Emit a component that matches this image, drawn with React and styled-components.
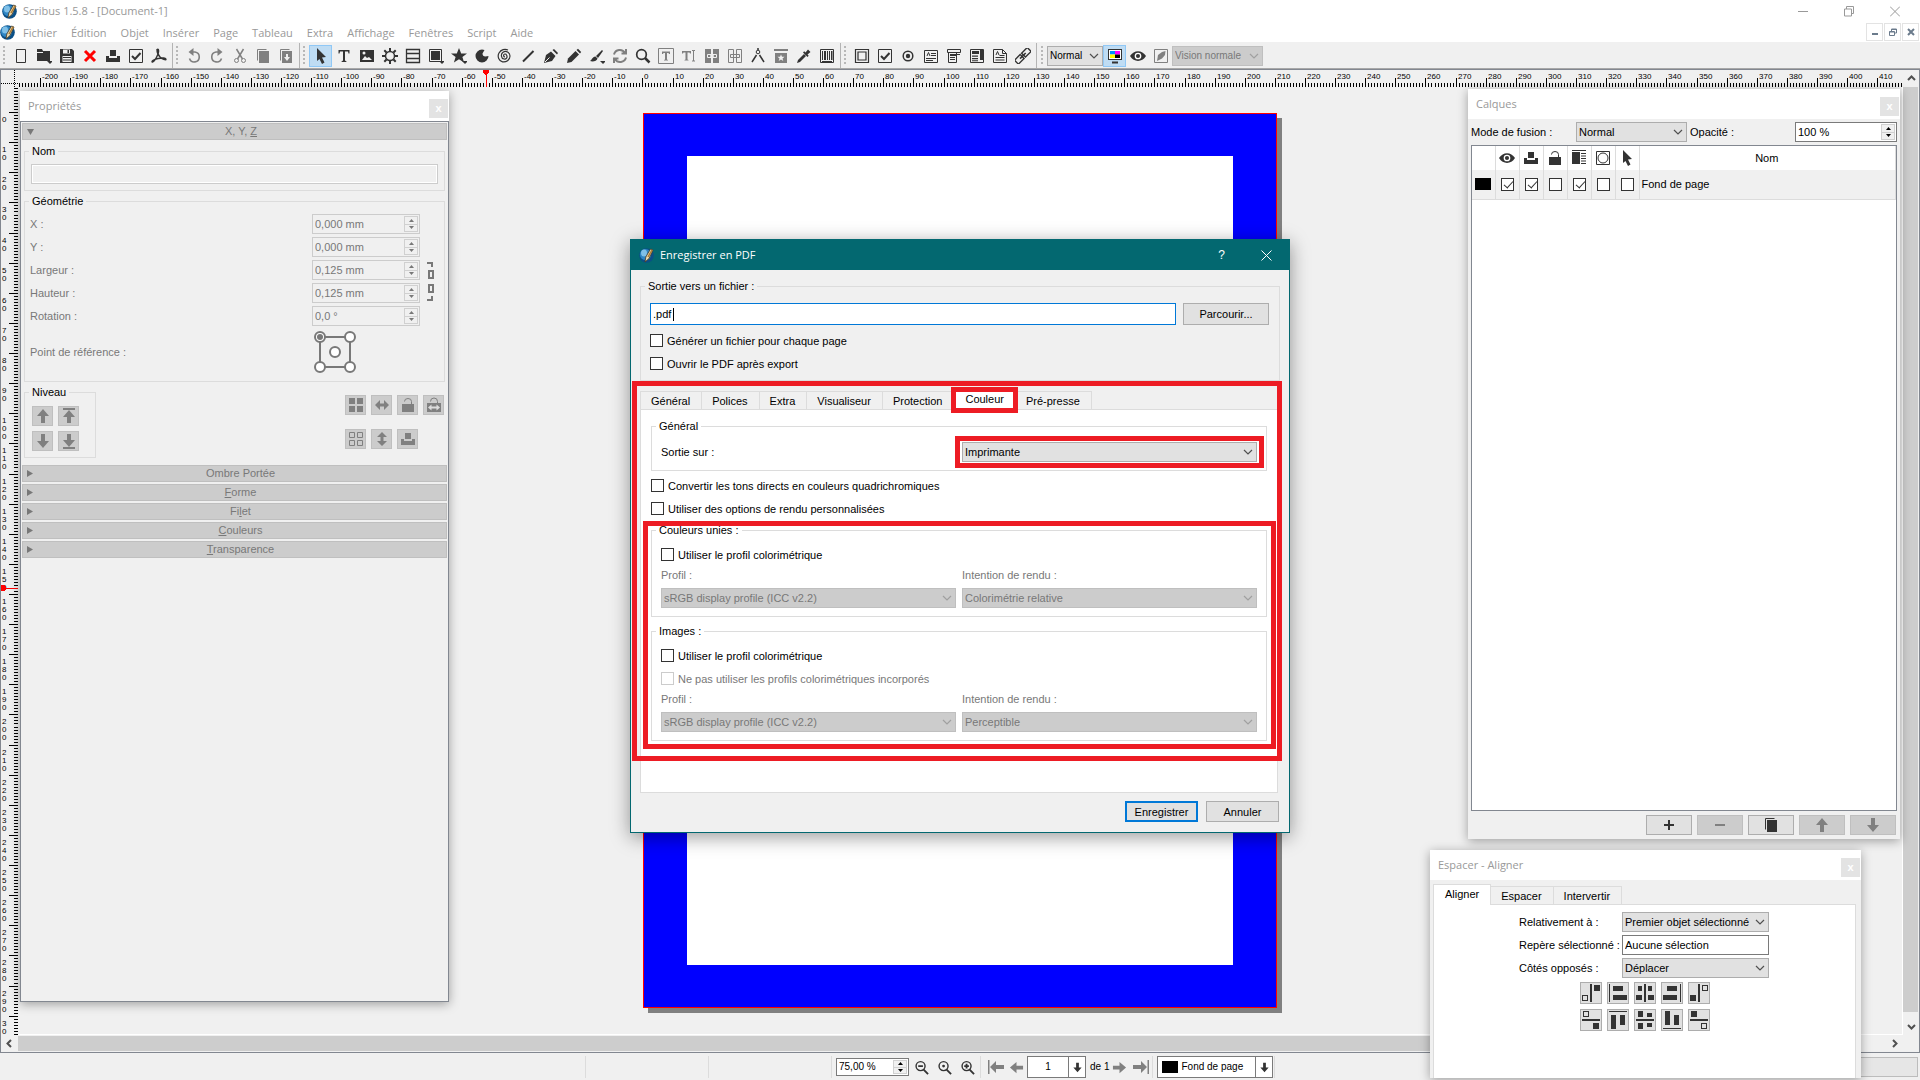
import React from "react";
import styled, { createGlobalStyle } from "styled-components";

const INK = "#333333";
const LINE = "#dcdcdc";
const FRAME = "#828790";
const RED = "#ed1c24";

/* ---------- rulers ---------- */

const MM = 3.0118;
const RULER_END = 948;
const ticks = (from, to) =>
	Array.from({ length: to - from + 1 }, (_, i) => from + i);

const HRuler = () => (
	<RulerSvg>
		{ticks(-208, 418).map((n) => {
			const x = Math.floor(642.9 + n * MM) - 18;
			const major = n % 10 === 0;
			return (
				<g key={n}>
					<rect x={x} y={major ? 8 : 13} width="1" height={major ? 9 : 4} />
					{major && (
						<text x={x + 2} y="9">
							{n}
						</text>
					)}
				</g>
			);
		})}
		<g fill="#ff0000">
			<path d="M465 0h6v2l-2 3h-2l-2-3z" />
			<rect x="468" y="2" width="1" height="15" />
		</g>
	</RulerSvg>
);

const VRuler = () => (
	<RulerSvg>
		{ticks(-8, 307).map((n) => {
			const y = Math.floor(112.6 + n * MM) - 87;
			const major = n % 10 === 0;
			return (
				<g key={n}>
					<rect x={major ? 8 : 13} y={y} width={major ? 9 : 4} height="1" />
					{major &&
						String(n)
							.split("")
							.filter((_, i) => y + 10 + i * 8 < RULER_END)
							.map((d, i) => (
								<text key={i} x="1" y={y + 10 + i * 8}>
									{d}
								</text>
							))}
				</g>
			);
		})}
		<g fill="#ff0000">
			<path d="M0 498h3l2 2v2l-2 2h-3z" />
			<rect x="2" y="501" width="15" height="1" />
		</g>
	</RulerSvg>
);

/* ---------- icons ---------- */

const caret = <path d="M11 13h6l-3 3z" />;
const ICONS = {
	blank: <path d="M3.5 1.5h9v13h-9z" fill="none" stroke="currentColor" />,
	open: (
		<>
			<path d="M1 1h5l1 2h7v10H1z" />
			<path d="M1 4.5h6" stroke="#f0f0f0" />
			{caret}
		</>
	),
	save: (
		<>
			<path d="M1 1h12l2 2v12H1z" />
			<path d="M4 1.5h7v4H4z" fill="#f0f0f0" />
			<path d="M8.5 2h1.500v3H8.500z" />
			<path d="M3.5 8h9v6h-9z" fill="#f0f0f0" />
			<path d="M4 9.5h8M4 12h8" stroke="currentColor" />
		</>
	),
	close: <path d="M3 3l10 10M13 3L3 13" stroke="#ff0000" strokeWidth="3" />,
	print: <path d="M5 2h6v6H5zM1 8h3v2h8V8h3v6H1z" />,
	preflight: (
		<>
			<path d="M1.5 1.5h13v13h-13z" fill="none" stroke="currentColor" />
			<path d="M4 8l3 3 5.500-6" fill="none" stroke="currentColor" strokeWidth="2" />
		</>
	),
	pdf: (
		<>
			<path d="M6 1.500c1.800-1 2 2 1 4.500S4 13 1.500 14c-1.500 0 .500-2.500 5.500-3.500s8-.500 8 .800-4-.300-6-2.300S6 4 6 1.500z" fill="none" stroke="currentColor" strokeWidth="1.400" />
			<path d="M6 1h1.500v5L6 4z" />
		</>
	),
	undo: (
		<>
			<path d="M6 4h3a5 5 0 1 1-5.500 6.500" fill="none" stroke="currentColor" strokeWidth="1.600" />
			<path d="M7.500 0v8L2.500 4z" />
		</>
	),
	redo: (
		<>
			<path d="M10 4H7a5 5 0 1 0 5.500 6.500" fill="none" stroke="currentColor" strokeWidth="1.600" />
			<path d="M8.500 0v8l5-4z" />
		</>
	),
	cut: (
		<>
			<path d="M4.500 1l6 10M11.500 1l-6 10" stroke="currentColor" strokeWidth="1.500" />
			<circle cx="4.500" cy="12.500" r="2" fill="none" stroke="currentColor" />
			<circle cx="11.500" cy="12.500" r="2" fill="none" stroke="currentColor" />
		</>
	),
	copy: (
		<>
			<path d="M2.500 12.500v-11h9" fill="none" stroke="currentColor" />
			<path d="M4 3h10v12H4z" />
		</>
	),
	paste: (
		<>
			<path d="M2.500 12.500v-11h9" fill="none" stroke="currentColor" />
			<path d="M4 3h10v12H4z" />
			<path d="M8 6h2v3h2l-3 4-3-4h2z" fill="#f0f0f0" />
		</>
	),
	cursor: <path d="M4 0l9 9-4 .500 2.500 5L9 16l-2.500-5L4 13z" />,
	text: <path d="M2.500 2h11v3.500h-1L12 3.500H9v9l1.500 1v.500h-5v-.500l1.500-1v-9H4l-.500 2h-1z" />,
	image: (
		<>
			<path d="M1 2h14v12H1z" />
			<path d="M3 12l3-4 2 2 2-1 3 3z" fill="#f0f0f0" />
			<circle cx="5" cy="5" r="1.500" fill="#f0f0f0" />
		</>
	),
	gear: (
		<>
			<circle cx="8" cy="8" r="4.500" fill="none" stroke="currentColor" strokeWidth="1.500" />
			<path
				d="M8 0v3M8 13v3M0 8h3M13 8h3M2.300 2.300l2.200 2.200M11.500 11.500l2.200 2.200M13.700 2.300l-2.200 2.200M4.500 11.500l-2.200 2.200"
				stroke="currentColor"
				strokeWidth="2"
			/>
		</>
	),
	table: (
		<path d="M1.500 1.500h13v13h-13zM1.500 5.500h13M1.500 10.500h13" fill="none" stroke="currentColor" strokeWidth="1.300" />
	),
	shape: (
		<>
			<path d="M1.500 1.500h12v12h-12z" fill="none" stroke="currentColor" />
			<path d="M3 3h9v9H3z" />
			{caret}
		</>
	),
	star: (
		<>
			<path d="M8 0l2.200 5.500H16l-4.600 3.500 1.700 5.500L8 11.300 2.900 14.500 4.600 9 0 5.500h5.800z" />
			{caret}
		</>
	),
	arc: <path d="M8 1.500a6.500 6.500 0 1 0 6.500 6.500l-3 .500a3 3 0 0 1-3-3l2-3.500z" />,
	spiral: (
		<path
			d="M8 9a1.500 1.500 0 1 1 1.500-2C11 9.500 9 11.500 7 11 4 10.500 3.500 6 6 4.200 9 2 13 4.500 13 8c0 4-4 6.500-7.500 5.800C2 13 0 8.500 2 5 4 1.500 8 .500 11 2"
			fill="none"
			stroke="currentColor"
			strokeWidth="1.200"
		/>
	),
	line: <path d="M3 13.500L13.500 3" stroke="currentColor" strokeWidth="2" />,
	pen: (
		<>
			<path d="M1 15l2-8 5-3.500L12.500 8 9 13z" />
			<path d="M9.500 2l1.500-1 4 4-1 1.500z" />
			<path d="M2 14l4.500-4.500" stroke="#f0f0f0" />
		</>
	),
	pencil: (
		<>
			<path d="M1 15l1-4.500L9.500 3 13 6.500 5.500 14z" />
			<path d="M10.500 2L12 .800 15.200 4 14 5.500z" />
		</>
	),
	brush: (
		<>
			<path d="M13 2l1 1-5 7-2-2zM6.500 8.500l2 2C8 13 4 14 1 13c2-1 2-4 5.500-4.500z" />
			{caret}
		</>
	),
	rotate: (
		<path
			d="M2 6.500A6 6 0 0 1 13 5M14 1v4.500H9.500M14 9.500A6 6 0 0 1 3 11M2 15v-4.500h4.500"
			fill="none"
			stroke="currentColor"
			strokeWidth="2"
		/>
	),
	zoom: (
		<>
			<circle cx="6.500" cy="6.500" r="4.800" fill="none" stroke="currentColor" strokeWidth="1.700" />
			<path d="M10 10l4.500 4.500" stroke="currentColor" strokeWidth="2.500" />
		</>
	),
	textFrame: (
		<>
			<path d="M.500.500h15v15H.500z" fill="none" stroke="currentColor" />
			<path d="M4 3.500h8V6h-1l-.500-1H9v6.500l1 .500v.500H6V12l1-.500V5H5.500L5 6H4z" />
		</>
	),
	textEdit: (
		<>
			<path d="M1 3h9v2.500H9L8.500 4.500h-2v7l1 .500v.500h-4V12l1-.500v-7h-2L2 5.500H1z" />
			<path d="M11 2.500h1.500V13H11M14 2.500h-1.500V13H14" fill="none" stroke="currentColor" />
		</>
	),
	link: (
		<>
			<path d="M1 1h6v14H1zM9 1h6v14H9z" />
			<path d="M3.500 6.500H7v3H3.500zM9 6.500h3.500v3H9zM6 8h4" fill="none" stroke="#f0f0f0" />
		</>
	),
	unlink: (
		<path
			d="M1.500 1.500h5v13h-5zM9.500 1.500h5v13h-5zM3.500 6.500h9v3h-9z"
			fill="none"
			stroke="currentColor"
		/>
	),
	compass: (
		<>
			<circle cx="8" cy="4" r="1.800" fill="none" stroke="currentColor" />
			<path d="M8 0v2M6.500 7l-4.500 7M9.500 7l4.500 7" fill="none" stroke="currentColor" strokeWidth="1.500" />
		</>
	),
	pageStar: (
		<>
			<path d="M1 1h14v2H1zM2 5h12v10H2z" />
			<path d="M8 6.500l1 2.300h2.500l-2 1.600.800 2.600L8 11.500 5.700 13l.800-2.600-2-1.600H7z" fill="#f0f0f0" />
		</>
	),
	dropper: (
		<>
			<path d="M1 15l1-3 6-6 2 2-6 6z" />
			<path d="M7 4.500l1.200-1.200L9.500 4.500 12 1.500l2.500 2.500-3 2.500 1.200 1.300L11.500 9z" />
		</>
	),
	barcode: (
		<>
			<path d="M1.500 1.500h13v13h-13z" fill="none" stroke="currentColor" />
			<path d="M3 3h1v9H3zM5 3h2v9H5zM8 3h1v9H8zM10 3h1v9h-1zM12 3h1.500v9H12zM3 13h10v1H3z" />
		</>
	),
	frame: (
		<path d="M1.500 1.500h13v13h-13zM4 4h8v8H4z" fill="none" stroke="currentColor" strokeWidth="1.200" />
	),
	radio: (
		<>
			<circle cx="8" cy="8" r="4.800" fill="none" stroke="currentColor" strokeWidth="1.500" />
			<circle cx="8" cy="8" r="2.200" />
		</>
	),
	textField: (
		<>
			<path d="M1.500 2.500h13v12h-13zM8 5.500h5M8 7.500h5M3 10.500h10M3 12.500h7" fill="none" stroke="currentColor" />
			<path d="M4 8l1.500-3.500L7 8" fill="none" stroke="currentColor" />
		</>
	),
	comboField: (
		<>
			<path d="M1.500 1.500h13v3h-13zM2.500 4.500v10h8v-10M11 6.500h3" fill="none" stroke="currentColor" />
			<path d="M4 6h6v2H4zM4 9h5v1H4zM4 11h5v1H4z" />
		</>
	),
	listField: (
		<>
			<path d="M1.500 1.500h13v13h-13z" fill="none" stroke="currentColor" />
			<path d="M3 3h7v3H3zM3 7.500h6v1.200H3zM3 10h6v1.200H3zM3 12.300h6v1H3zM11 2h3v10h-3z" />
		</>
	),
	note: (
		<>
			<path d="M1.500 1.500h9l4 4v9h-13zM10.500 1.500v4h4M7.500 7.500h5M3.500 9.500h9M3.500 12h9" fill="none" stroke="currentColor" />
			<path d="M4 7l1.500-3.500L7 7" fill="none" stroke="currentColor" />
		</>
	),
	chain: (
		<g transform="rotate(-45 8 8)" fill="none" stroke="currentColor" strokeWidth="1.400">
			<rect x="-1" y="5" width="8" height="5.500" />
			<rect x="9" y="5" width="8" height="5.500" />
			<path d="M4 7.800h8" strokeWidth="1.600" />
		</g>
	),
	cmyk: (
		<>
			<path d="M1 1h14v11H1z" />
			<path d="M2 2h12v9H2z" fill="#fff" />
			<path d="M3 3h5v3.500H3z" fill="#0090ff" />
			<path d="M8 3h5v3.500H8z" fill="#ff00ff" />
			<path d="M3 6.500h5V10H3z" fill="#ffff00" />
			<path d="M8 6.500h5V10H8z" fill="#000" />
			<path d="M5 13.500h6v2H5z" />
		</>
	),
	eye: (
		<>
			<path d="M0 8c4-6.500 12-6.500 16 0-4 6.500-12 6.500-16 0z" />
			<circle cx="8" cy="8" r="2.700" fill="none" stroke="#fff" strokeWidth="1.300" />
		</>
	),
	penFrame: (
		<>
			<path d="M1.500 1.500h13v13h-13z" fill="none" stroke="currentColor" />
			<path d="M4 13l1-6 4-3 3.500-1-.500 4-3 3.500z" />
		</>
	),
	lock: (
		<>
			<path d="M2 7h12v8H2z" />
			<path d="M4.500 4.500a3.500 3 0 0 1 7 0V7" fill="none" stroke="currentColor" />
		</>
	),
	lockSize: (
		<>
			<path d="M1 6h14v9H1z" />
			<path d="M4.500 4.500a3.500 3.500 0 0 1 7 0V6" fill="none" stroke="currentColor" />
			<path d="M2 10.500L5.500 7.500v2h5v-2l3.500 3-3.500 3v-2h-5v2z" fill="#ddd" />
		</>
	),
	flow: (
		<>
			<path d="M1 2h8v12H1z" />
			<path d="M1 .500h14M10 3.500h5M10 6h5M10 8.500h5M10 11h5M10 13.500h5" stroke="currentColor" />
		</>
	),
	outline: (
		<>
			<path d="M1.500 1.500h13v13h-13z" fill="none" stroke="currentColor" />
			<circle cx="8" cy="8" r="5" fill="none" stroke="currentColor" />
		</>
	),
	up: <path d="M8 1l6 7h-4v7H6V8H2z" />,
	down: <path d="M8 15l6-7h-4V1H6v7H2z" />,
	top: <path d="M2 0h12v2H2zM8 2l6 7h-4v6H6V9H2z" />,
	bottom: <path d="M2 14h12v2H2zM8 14l6-7h-4V1H6v6H2z" />,
	left: <path d="M1 8l7-6v4h7v4H8v4z" />,
	right: <path d="M15 8L8 2v4H1v4h7v4z" />,
	first: <path d="M0 1h1.500v14H0zM2 8l6-6v4h8v4H8v4z" />,
	last: <path d="M14.500 1H16v14h-1.500zM14 8L8 2v4H0v4h8v4z" />,
	grid: <path d="M1 1h6v6H1zM9 1h6v6H9zM1 9h6v6H1zM9 9h6v6H9z" />,
	gridHollow: (
		<path
			d="M1.500 1.500h5v5h-5zM9.500 1.500h5v5h-5zM1.500 9.500h5v5h-5zM9.500 9.500h5v5h-5z"
			fill="none"
			stroke="currentColor"
		/>
	),
	flipH: <path d="M1 8l5-5v3.500h4V3l5 5-5 5V9.500H6V13z" />,
	flipV: <path d="M8 1l5 5H9.500v4H13l-5 5-5-5h3.500V6H3z" />,
	plus: <path d="M7 3h2v4h4v2H9v4H7V9H3V7h4z" />,
	minus: <path d="M3 7h10v2H3z" />,
	zoomOut: (
		<>
			<circle cx="7" cy="6.500" r="4.800" fill="none" stroke="currentColor" strokeWidth="1.500" />
			<path d="M4.500 6.500h5M10 10l5 5" stroke="currentColor" strokeWidth="2" />
		</>
	),
	zoomFit: (
		<>
			<circle cx="7" cy="6.500" r="4.800" fill="none" stroke="currentColor" strokeWidth="1.500" />
			<circle cx="7" cy="6.500" r="1.500" />
			<path d="M10 10l5 5" stroke="currentColor" strokeWidth="2" />
		</>
	),
	zoomIn: (
		<>
			<circle cx="7" cy="6.500" r="4.800" fill="none" stroke="currentColor" strokeWidth="1.500" />
			<path d="M4.500 6.500h5M7 4v5M10 10l5 5" stroke="currentColor" strokeWidth="2" />
		</>
	),
};

const Icon = ({ name, size = 16 }) => (
	<svg width={size} height={size} viewBox="0 0 16 16" fill="currentColor" aria-hidden="true">
		{ICONS[name]}
	</svg>
);

const Logo = () => (
	<svg width="15" height="15" viewBox="0 0 15 15" aria-hidden="true">
		<circle cx="7.500" cy="7.500" r="7.300" fill="#0b4f86" />
		<circle cx="6.500" cy="6.500" r="5.600" fill="#2f86c4" />
		<ellipse cx="5" cy="5" rx="3" ry="3.500" fill="#7fc0e8" />
		<path d="M6 14l.800-5L11.500 1l2.500 1-4 8.500z" fill="#e9d9b0" stroke="#4a3a22" strokeWidth=".800" />
		<path d="M9 9l4-7" stroke="#b07c30" strokeWidth="1.500" />
	</svg>
);

const Chevron = () => (
	<svg width="10" height="6" viewBox="0 0 10 6" aria-hidden="true">
		<path d="M1 1l4 4 4-4" fill="none" stroke="currentColor" strokeWidth="1.200" />
	</svg>
);

const ScrollArrow = ({ d }) => (
	<svg width="9" height="9" viewBox="0 0 9 9" aria-hidden="true">
		<path d={d} fill="none" stroke="#505050" strokeWidth="2" />
	</svg>
);

const ReferencePoint = () => (
	<svg width="46" height="46" viewBox="0 0 46 46" aria-hidden="true">
		<g fill="none" stroke="#787878" strokeWidth="2">
			<path d="M8 8h30v30H8z" />
			{[[8, 8], [38, 8], [23, 23], [8, 38], [38, 38]].map(([x, y]) => (
				<circle key={`${x}-${y}`} cx={x} cy={y} r="5" fill="#fff" />
			))}
			<circle cx="8" cy="8" r="3" fill="#787878" stroke="none" />
		</g>
	</svg>
);

const LinkIcon = () => (
	<svg width="8" height="40" viewBox="0 0 8 40" fill="none" stroke="#787878" strokeWidth="2" aria-hidden="true">
		<path d="M0 1h5v4M2 9h4v7H2zM2 23h4v7H2zM0 38h5v-4" />
	</svg>
);

// "s" is a solid block, "h" a hollow one, "l" the guide line: [kind, x, y, w, h]
const ALIGN_ICONS = [
	[["h", 2, 13, 6, 6], ["l", 10, 2, 2, 18], ["s", 14, 3, 6, 6]],
	[["l", 2, 2, 1, 18], ["s", 6, 4, 10, 5], ["s", 6, 13, 14, 5]],
	[["l", 10, 2, 2, 18], ["s", 4, 4, 4, 5], ["s", 14, 4, 4, 5], ["s", 2, 13, 6, 5], ["s", 14, 13, 6, 5]],
	[["l", 19, 2, 1, 18], ["s", 6, 4, 10, 5], ["s", 2, 13, 14, 5]],
	[["s", 2, 13, 6, 6], ["l", 10, 2, 2, 18], ["h", 14, 3, 6, 6]],
	[["h", 3, 2, 6, 6], ["l", 2, 10, 18, 2], ["s", 13, 14, 6, 6]],
	[["l", 2, 2, 18, 1], ["s", 4, 6, 5, 14], ["s", 13, 6, 5, 10]],
	[["s", 4, 2, 5, 6], ["s", 13, 4, 5, 4], ["l", 2, 10, 18, 2], ["s", 4, 14, 5, 6], ["s", 13, 14, 5, 4]],
	[["l", 2, 19, 18, 1], ["s", 4, 2, 5, 14], ["s", 13, 6, 5, 10]],
	[["s", 3, 2, 6, 6], ["l", 2, 10, 18, 2], ["h", 13, 14, 6, 6]],
];

const AlignIcon = ({ parts }) => (
	<svg width="20" height="20" viewBox="1 1 20 20" aria-hidden="true">
		{parts.map(([kind, x, y, w, h], i) =>
			kind === "h" ? (
				<rect key={i} x={x + 0.5} y={y + 0.5} width={w - 1} height={h - 1} fill="none" stroke={INK} />
			) : (
				<rect key={i} x={x} y={y} width={w} height={h} fill={INK} />
			)
		)}
	</svg>
);

/* ---------- shared controls ---------- */

const Select = ({ id, value, disabled, small, label }) => (
	<SelectBox $disabled={disabled}>
		<SelectInput id={id} disabled={disabled} aria-label={label} $small={small} defaultValue={value}>
			<option>{value}</option>
		</SelectInput>
		<Chevron />
	</SelectBox>
);

const Spin = ({ id, value, disabled, label, small }) => (
	<SpinBox $disabled={disabled} $small={small}>
		<input id={id} defaultValue={value} disabled={disabled} aria-label={label} />
		<SpinArrows>
			<button type="button" disabled={disabled} aria-label="Augmenter">
				<svg width="5" height="3" viewBox="0 0 5 3"><path d="M0 3L2.500 0 5 3z" fill="currentColor" /></svg>
			</button>
			<button type="button" disabled={disabled} aria-label="Diminuer">
				<svg width="5" height="3" viewBox="0 0 5 3"><path d="M0 0l2.500 3L5 0z" fill="currentColor" /></svg>
			</button>
		</SpinArrows>
	</SpinBox>
);

const Check = ({ children, disabled }) => (
	<CheckLabel $disabled={disabled}>
		<Checkbox type="checkbox" disabled={disabled} />
		{children}
	</CheckLabel>
);

const PanelTitle = ({ children }) => (
	<PanelBar>
		<h2>{children}</h2>
		<PanelClose type="button" aria-label="Fermer">x</PanelClose>
	</PanelBar>
);

/* ---------- toolbar ---------- */

const MENUS = ["Fichier", "Édition", "Objet", "Insérer", "Page", "Tableau", "Extra", "Affichage", "Fenêtres", "Script", "Aide"];

// a leading "-" greys the tool out, a leading "*" marks it as active
const TOOLS = [
	["blank", "open", "save", "close", "print", "preflight", "pdf"],
	["-undo", "-redo", "-cut", "-copy", "-paste"],
	["*cursor", "text", "image", "gear", "table", "shape", "star", "arc", "spiral", "line", "pen", "pencil", "brush", "-rotate", "zoom", "-textFrame", "-textEdit", "-link", "-unlink", "compass", "-pageStar", "dropper", "barcode"],
	["frame", "preflight", "radio", "textField", "comboField", "listField", "note", "chain"],
];

const Tool = ({ spec }) => {
	const name = spec.replace(/^[-*]/, "");
	return (
		<ToolButton type="button" aria-label={name} $active={spec[0] === "*"} $dim={spec[0] === "-"}>
			<Icon name={name} />
		</ToolButton>
	);
};

const Toolbar = () => (
	<ToolRow>
		{TOOLS.map((group, i) => (
			<ToolGroup key={i}>
				<Grip />
				{group.map((t) => (
					<Tool key={t} spec={t} />
				))}
			</ToolGroup>
		))}
		<ToolGroup $last>
			<Grip />
			<PreviewQuality>
				<Select value="Normal" small label="Qualité" />
			</PreviewQuality>
			<Tool spec="*cmyk" />
			<Tool spec="eye" />
			<Tool spec="-penFrame" />
			<VisionMode>
				<Select value="Vision normale" small disabled label="Vision" />
			</VisionMode>
		</ToolGroup>
	</ToolRow>
);

/* ---------- panels ---------- */

const GEOMETRY = [
	["X :", "0,000 mm"],
	["Y :", "0,000 mm"],
	["Largeur :", "0,125 mm"],
	["Hauteur :", "0,125 mm"],
	["Rotation :", "0,0 °"],
];

const SECTIONS = [
	["", "", "Ombre Portée"],
	["", "F", "orme"],
	["Fi", "l", "et"],
	["", "C", "ouleurs"],
	["", "T", "ransparence"],
];

const Properties = () => (
	<PropertiesPanel>
		<PanelTitle>Propriétés</PanelTitle>
		<PropertiesBody>
			<SectionBar type="button">
				<svg width="7" height="6" viewBox="0 0 7 6"><path d="M0 0h7L3.500 6z" fill="currentColor" /></svg>
				<span>X, Y, <u>Z</u></span>
			</SectionBar>
			<PropertiesForm>
				<Group>
					<legend>Nom</legend>
					<NameBody>
						<NameInput disabled aria-label="Nom" />
					</NameBody>
				</Group>
				<Group>
					<legend>Géométrie</legend>
					<GeometryGrid>
						{GEOMETRY.map(([label, value], i) => (
							<React.Fragment key={label}>
								<DimLabel htmlFor={`geo${i}`}>{label}</DimLabel>
								<Spin id={`geo${i}`} value={value} disabled />
							</React.Fragment>
						))}
						<DimLabel as="span">Point de référence :</DimLabel>
						<ReferencePoint />
						<LinkCell>
							<LinkIcon />
						</LinkCell>
					</GeometryGrid>
				</Group>
				<LevelRow>
					<Group>
						<legend>Niveau</legend>
						<LevelGrid>
							{["up", "top", "down", "bottom"].map((n) => (
								<SmallButton key={n} type="button" disabled aria-label={n}><Icon name={n} /></SmallButton>
							))}
						</LevelGrid>
					</Group>
					<ObjectGrid>
						{["grid", "flipH", "lock", "lockSize", "gridHollow", "flipV", "print"].map((n) => (
							<SmallButton key={n} type="button" disabled aria-label={n}><Icon name={n} /></SmallButton>
						))}
					</ObjectGrid>
				</LevelRow>
			</PropertiesForm>
			<SectionList>
				{SECTIONS.map(([a, key, b]) => (
					<SectionBar key={b} type="button">
						<svg width="6" height="7" viewBox="0 0 6 7"><path d="M0 0v7l6-3.500z" fill="currentColor" /></svg>
						<span>{a}{key && <u>{key}</u>}{b}</span>
					</SectionBar>
				))}
			</SectionList>
		</PropertiesBody>
	</PropertiesPanel>
);

const Layers = () => (
	<LayersPanel>
		<PanelTitle>Calques</PanelTitle>
		<LayersBody>
			<BlendRow>
				<label htmlFor="blend">Mode de fusion :</label>
				<Select id="blend" value="Normal" />
				<label htmlFor="opacity">Opacité :</label>
				<Spin id="opacity" value="100 %" />
			</BlendRow>
			<LayerList>
				<LayerTable>
					<thead>
						<tr>
							<th aria-label="Couleur" />
							{["eye", "print", "lock", "flow", "outline", "cursor"].map((n) => (
								<th key={n} aria-label={n}><Icon name={n} /></th>
							))}
							<th>Nom</th>
						</tr>
					</thead>
					<tbody>
						<tr>
							<td><Swatch /></td>
							{[true, true, false, true, false, false].map((on, i) => (
								<td key={i}>
									<Checkbox type="checkbox" defaultChecked={on} aria-label={`Option ${i + 1}`} />
								</td>
							))}
							<td>Fond de page</td>
						</tr>
					</tbody>
				</LayerTable>
			</LayerList>
			<LayerButtons>
				{["plus", "-minus", "copy", "-up", "-down"].map((s) => (
					<WideButton key={s} type="button" disabled={s[0] === "-"} aria-label={s.replace("-", "")}>
						<Icon name={s.replace("-", "")} />
					</WideButton>
				))}
			</LayerButtons>
		</LayersBody>
	</LayersPanel>
);

const Align = () => (
	<AlignPanel>
		<PanelTitle>Espacer - Aligner</PanelTitle>
		<AlignBody>
			<TabList role="tablist">
				<Tab type="button" role="tab" aria-selected="true" $on>Aligner</Tab>
				<Tab type="button" role="tab">Espacer</Tab>
				<Tab type="button" role="tab">Intervertir</Tab>
			</TabList>
			<AlignPane>
				<AlignForm>
					<label htmlFor="relative">Relativement à :</label>
					<Select id="relative" value="Premier objet sélectionné" />
					<label htmlFor="guide">Repère sélectionné :</label>
					<GuideInput id="guide" defaultValue="Aucune sélection" />
					<label htmlFor="sides">Côtés opposés :</label>
					<Select id="sides" value="Déplacer" />
				</AlignForm>
				<AlignGrid>
					{ALIGN_ICONS.map((parts, i) => (
						<AlignButton key={i} type="button" aria-label={`Alignement ${i + 1}`}>
							<AlignIcon parts={parts} />
						</AlignButton>
					))}
				</AlignGrid>
			</AlignPane>
		</AlignBody>
	</AlignPanel>
);

const ProfileFields = ({ id, intent }) => (
	<TwoColumns>
		<DimLabel htmlFor={`${id}-profile`}>Profil :</DimLabel>
		<DimLabel htmlFor={`${id}-intent`}>Intention de rendu :</DimLabel>
		<Select id={`${id}-profile`} value="sRGB display profile (ICC v2.2)" disabled />
		<Select id={`${id}-intent`} value={intent} disabled />
	</TwoColumns>
);

const ExportDialog = () => (
	<Dialog role="dialog" aria-label="Enregistrer en PDF">
		<DialogBar>
			<Logo />
			<h2>Enregistrer en PDF</h2>
			<DialogBarButton type="button">?</DialogBarButton>
			<DialogBarButton type="button" aria-label="Fermer">
				<svg width="11" height="11" viewBox="0 0 11 11"><path d="M.500.500l10 10M10.500.500l-10 10" stroke="#fff" /></svg>
			</DialogBarButton>
		</DialogBar>
		<DialogBody>
			<Group>
				<legend>Sortie vers un fichier :</legend>
				<GroupBody>
					<FileRow>
						<FileField>
							<FileInput defaultValue=".pdf" aria-label="Sortie vers un fichier" />
							<TextCaret />
						</FileField>
						<PushButton type="button" $wide>Parcourir...</PushButton>
					</FileRow>
					<Check>Générer un fichier pour chaque page</Check>
					<Check>Ouvrir le PDF après export</Check>
				</GroupBody>
			</Group>
			<TabArea>
				<TabList role="tablist">
					{["Général", "Polices", "Extra", "Visualiseur", "Protection"].map((t) => (
						<Tab key={t} type="button" role="tab">{t}</Tab>
					))}
					<Tab type="button" role="tab" aria-selected="true" $on $marked>Couleur</Tab>
					<Tab type="button" role="tab">Pré-presse</Tab>
				</TabList>
				<Pane>
					<Group>
						<legend>Général</legend>
						<GroupBody>
							<TwoColumns>
								<label htmlFor="output">Sortie sur :</label>
								<MarkedField>
									<Select id="output" value="Imprimante" />
								</MarkedField>
							</TwoColumns>
						</GroupBody>
					</Group>
					<Check>Convertir les tons directs en couleurs quadrichromiques</Check>
					<Check>Utiliser des options de rendu personnalisées</Check>
					<MarkedGroups>
						<Group>
							<legend>Couleurs unies :</legend>
							<GroupBody>
								<Check>Utiliser le profil colorimétrique</Check>
								<ProfileFields id="solid" intent="Colorimétrie relative" />
							</GroupBody>
						</Group>
						<Group>
							<legend>Images :</legend>
							<GroupBody>
								<Check>Utiliser le profil colorimétrique</Check>
								<Check disabled>Ne pas utiliser les profils colorimétriques incorporés</Check>
								<ProfileFields id="image" intent="Perceptible" />
							</GroupBody>
						</Group>
					</MarkedGroups>
				</Pane>
			</TabArea>
			<DialogButtons>
				<PushButton type="button" $primary>Enregistrer</PushButton>
				<PushButton type="button">Annuler</PushButton>
			</DialogButtons>
		</DialogBody>
	</Dialog>
);

const StatusBar = () => (
	<Status>
		<StatusCell />
		<StatusCell />
		<StatusCell />
		<StatusGroup>
			<ZoomField>
				<Spin value="75,00 %" label="Zoom" small />
			</ZoomField>
			{["zoomOut", "zoomFit", "zoomIn"].map((n) => (
				<ToolButton key={n} type="button" aria-label={n}><Icon name={n} size={15} /></ToolButton>
			))}
		</StatusGroup>
		<StatusGroup>
			<NavButton type="button" aria-label="Première page"><Icon name="first" /></NavButton>
			<NavButton type="button" aria-label="Page précédente"><Icon name="left" size={15} /></NavButton>
			<StatusCombo $width={59}>
				<input defaultValue="1" aria-label="Page" />
				<button type="button" aria-label="Choisir la page"><Icon name="down" size={11} /></button>
			</StatusCombo>
			<PageCount>de 1</PageCount>
			<NavButton type="button" aria-label="Page suivante"><Icon name="right" size={15} /></NavButton>
			<NavButton type="button" aria-label="Dernière page"><Icon name="last" /></NavButton>
		</StatusGroup>
		<StatusGroup>
			<StatusCombo $width={116}>
				<Swatch />
				<span>Fond de page</span>
				<button type="button" aria-label="Choisir le calque"><Icon name="down" size={11} /></button>
			</StatusCombo>
		</StatusGroup>
		<Progress />
	</Status>
);

const App = () => (
	<Shell>
		<GlobalStyle />
		<TitleBar>
			<Logo />
			<h1>Scribus 1.5.8 - [Document-1]</h1>
			<WindowButtons>
				<svg width="10" height="11" viewBox="0 0 10 11"><path d="M0 5.500h10" stroke="#999" /></svg>
				<svg width="10" height="11" viewBox="0 0 10 11"><path d="M.500 3h7v7h-7zM2.500 3V.500h7v7H8" fill="none" stroke="#999" /></svg>
				<svg width="10" height="11" viewBox="0 0 10 11"><path d="M0 .500l10 10M10 .500l-10 10" stroke="#999" /></svg>
			</WindowButtons>
		</TitleBar>
		<MenuBar>
			<Logo />
			<nav>
				{MENUS.map((m) => (
					<MenuItem key={m} type="button">{m}</MenuItem>
				))}
			</nav>
			<DocButtons>
				<DocButton type="button" aria-label="Réduire">
					<svg width="8" height="8" viewBox="0 0 8 8"><path d="M1 6h6" stroke="#6b7b8c" strokeWidth="2" /></svg>
				</DocButton>
				<DocButton type="button" aria-label="Restaurer">
					<svg width="8" height="8" viewBox="0 0 8 8"><path d="M.500 3.500h5v4h-5zM2.500 3V1h5v4H6M.500 4h5M2.500 1.500h5" fill="none" stroke="#6b7b8c" /></svg>
				</DocButton>
				<DocButton type="button" aria-label="Fermer le document">
					<svg width="8" height="8" viewBox="0 0 8 8"><path d="M1 1l6 6M7 1L1 7" stroke="#6b7b8c" strokeWidth="2" /></svg>
				</DocButton>
			</DocButtons>
		</MenuBar>
		<Toolbar />
		<Workspace>
			<Corner />
			<HRuler />
			<ScrollButton><ScrollArrow d="M1 6l3.500-3.500L8 6" /></ScrollButton>
			<VRuler />
			<Canvas>
				<DocumentPage />
			</Canvas>
			<VScroll>
				<VThumb />
				<ScrollButton><ScrollArrow d="M1 3l3.500 3.500L8 3" /></ScrollButton>
			</VScroll>
			<HScroll>
				<ScrollButton><ScrollArrow d="M6 1L2.500 4.500 6 8" /></ScrollButton>
				<HThumb />
				<ScrollButton><ScrollArrow d="M3 1l3.500 3.500L3 8" /></ScrollButton>
			</HScroll>
		</Workspace>
		<StatusBar />
		<Properties />
		<Layers />
		<Align />
		<ExportDialog />
	</Shell>
);

export default App;

/* ---------- styles ---------- */

const GlobalStyle = createGlobalStyle`
	* {
		box-sizing: border-box;
	}

	body {
		margin: 0;
		overflow: hidden;
		background: #f0f0f0;
		color: #000;
		font: 11px/14px "Liberation Sans", Arial, sans-serif;
	}

	h1, h2 {
		margin: 0;
		font: 400 11px/16px "Open Sans", "Noto Sans", sans-serif;
	}

	button, input, select {
		margin: 0;
		font: inherit;
		color: inherit;
		border-radius: 0;
		outline: none;
	}

	svg {
		display: block;
		flex: none;
	}
`;

const Shell = styled.div`
	position: relative;
	display: flex;
	flex-direction: column;
	height: 100vh;
	overflow: hidden;
`;

const TitleBar = styled.header`
	display: flex;
	align-items: center;
	gap: 6px;
	height: 22px;
	padding: 0 18px 0 2px;
	background: #fff;
	color: #999;
`;

const WindowButtons = styled.div`
	display: flex;
	gap: 36px;
	margin-left: auto;
	padding-right: 2px;
`;

const MenuBar = styled.div`
	display: flex;
	align-items: center;
	height: 21px;
	background: #fff;
	border-bottom: 1px solid #f0f0f0;

	nav {
		display: flex;
		padding-left: 1px;
	}
`;

const MenuItem = styled.button`
	padding: 1px 7px 0;
	border: 0;
	background: none;
	color: #999;
	font: 400 11px/16px "Open Sans", "Noto Sans", sans-serif;
`;

const DocButtons = styled.div`
	display: flex;
	gap: 1px;
	margin-left: auto;
	padding-right: 1px;
`;

const DocButton = styled.button`
	display: grid;
	place-items: center;
	width: 17px;
	height: 18px;
	padding: 0;
	border: 1px solid #e3e3e3;
	background: #fff;
`;

const ToolRow = styled.div`
	display: flex;
	height: 26px;
	border-bottom: 1px solid #a8a8a8;
`;

const ToolGroup = styled.div`
	display: flex;
	align-items: center;
	padding: ${({ $last }) => ($last ? "0 0 0 1px" : "0 2px 0 0")};
	border-right: ${({ $last }) => ($last ? "0" : "1px solid #b4b4b4")};
`;

const Grip = styled.i`
	width: 3px;
	height: 19px;
	margin: 0 3px;
	background: repeating-linear-gradient(#b8b8b8 0 2px, transparent 2px 4px) left / 2px 100% no-repeat;
`;

const ToolButton = styled.button`
	display: grid;
	place-items: center;
	width: 23px;
	height: 22px;
	padding: 0;
	border: 1px solid ${({ $active }) => ($active ? "#90c8f6" : "transparent")};
	background: ${({ $active }) => ($active ? "#bfdcf3" : "none")};
	color: ${({ $dim }) => ($dim ? "#808080" : INK)};
`;

const PreviewQuality = styled.div`
	width: 56px;
`;

const VisionMode = styled.div`
	width: 91px;
`;

const Workspace = styled.main`
	display: grid;
	flex: 1;
	min-height: 0;
	grid-template: 17px minmax(0, 1fr) 17px / 17px minmax(0, 1fr) 16px;
	border: 1px solid ${FRAME};
`;

const Corner = styled.div`
	background:
		repeating-linear-gradient(#000 0 1px, transparent 1px 2px) 13px 0 / 1px 100% no-repeat,
		repeating-linear-gradient(90deg, #000 0 1px, transparent 1px 2px) 0 13px / 100% 1px no-repeat;
`;

const RulerSvg = styled.svg`
	width: 100%;
	height: 100%;
	overflow: hidden;
	shape-rendering: crispEdges;
	font: 8px "Liberation Sans", sans-serif;
`;

const Canvas = styled.div`
	position: relative;
	overflow: hidden;
	border-right: 1px solid #fff;
	border-bottom: 1px solid #fff;
`;

const DocumentPage = styled.div`
	position: absolute;
	left: 625px;
	top: 26px;
	width: 634px;
	height: 895px;
	padding: 42px 43px;
	border: 1px solid #f00;
	background: linear-gradient(#fff, #fff) content-box, #00f;
	box-shadow: 5px 5px 0 #808080;
`;

const ScrollButton = styled.div`
	display: grid;
	place-items: center;
	width: 17px;
	height: 17px;
`;

const VScroll = styled.div`
	display: flex;
	flex-direction: column;
`;

const VThumb = styled.div`
	flex: 1;
	width: 15px;
	margin-bottom: 6px;
	background: #cdcdcd;
`;

const HScroll = styled.div`
	display: flex;
	grid-column: 1 / -1;
	padding-right: 16px;
`;

const HThumb = styled.div`
	flex: 1;
	height: 15px;
	margin: 1px 26px 1px 0;
	background: #cdcdcd;
`;

/* floating windows */

const FloatingPanel = styled.section`
	position: absolute;
	display: flex;
	flex-direction: column;
	background: #f0f0f0;
	box-shadow: 0 2px 10px rgba(0, 0, 0, 0.35);
`;

const PropertiesPanel = styled(FloatingPanel)`
	left: 20px;
	top: 91px;
	bottom: 78px;
	width: 429px;
`;

const LayersPanel = styled(FloatingPanel)`
	right: 20px;
	top: 89px;
	bottom: 241px;
	width: 432px;
`;

const AlignPanel = styled(FloatingPanel)`
	right: 59px;
	bottom: 2px;
	width: 431px;
	height: 228px;
`;

const PanelBar = styled.header`
	display: flex;
	align-items: center;
	justify-content: space-between;
	height: 30px;
	padding: 0 1px 0 8px;
	background: #fff;
	color: #999;
`;

const PanelClose = styled.button`
	width: 19px;
	height: 19px;
	margin-top: 4px;
	padding: 0;
	border: 0;
	background: #e3e3e3;
	color: #fff;
	line-height: 16px;
	font-weight: 700;
`;

const PropertiesBody = styled.div`
	flex: 1;
	padding: 1px;
	border: 1px solid ${FRAME};
`;

const PropertiesForm = styled.div`
	display: grid;
	gap: 3px;
	padding: 4px 2px 7px;
`;

const SectionBar = styled.button`
	display: flex;
	align-items: center;
	width: 100%;
	height: 17px;
	padding: 0 0 0 4px;
	border: 1px solid #bfbfbf;
	background: #ccc;
	color: #787878;
	line-height: 15px;

	span {
		flex: 1;
		padding-left: 2px;
		text-align: center;
	}
`;

const SectionList = styled.div`
	display: grid;
	gap: 2px;
`;

const Group = styled.fieldset`
	min-width: 0;
	margin: 0;
	padding: 0;
	border: 1px solid ${LINE};

	legend {
		margin-left: 4px;
		padding: 0 3px;
		height: 14px;
	}
`;

const NameBody = styled.div`
	display: flex;
	padding: 6px;
`;

const NameInput = styled.input`
	flex: 1;
	height: 20px;
	border: 1px solid #ccc;
	background: #f0f0f0;
	box-shadow: inset 0 0 0 1px #fff;
`;

const GeometryGrid = styled.div`
	position: relative;
	display: grid;
	grid-template-columns: 1fr 132px;
	align-items: center;
	gap: 3px 0;
	padding: 6px 0 6px 5px;
`;

const LinkCell = styled.div`
	position: absolute;
	right: 9px;
	top: 54px;
`;

const DimLabel = styled.label`
	color: #787878;
	line-height: 13px;
`;

const LevelRow = styled.div`
	display: flex;
	justify-content: space-between;
	align-items: flex-start;
`;

const LevelGrid = styled.div`
	display: grid;
	grid-template-columns: 21px 21px;
	gap: 5px;
	padding: 7px 16px 6px 7px;
`;

const ObjectGrid = styled.div`
	display: grid;
	grid-template-columns: repeat(4, 21px);
	gap: 14px 5px;
	padding: 10px 1px 0 0;
`;

const SmallButton = styled.button`
	display: grid;
	place-items: center;
	height: 20px;
	padding: 0;
	border: 1px solid #bfbfbf;
	background: #ccc;
	color: #808080;
`;

const LayersBody = styled.div`
	display: flex;
	flex: 1;
	flex-direction: column;
	min-height: 0;
	padding: 3px 3px 4px;
`;

const BlendRow = styled.div`
	display: grid;
	grid-template-columns: 102px 111px 102px 102px;
	justify-content: space-between;
	align-items: center;
	padding-bottom: 3px;
`;

const LayerList = styled.div`
	flex: 1;
	border: 1px solid ${FRAME};
	background: #fff;
`;

const LayerTable = styled.table`
	width: 100%;
	border-collapse: collapse;
	table-layout: fixed;

	th, td {
		width: 24px;
		padding: 0;
		border-right: 1px solid ${LINE};
		color: ${INK};
		font-weight: 400;
		vertical-align: middle;
	}

	th {
		height: 24px;
	}

	td {
		height: 29px;
		border-bottom: 1px solid ${LINE};
		background: #f0f0f0;
		color: #000;
	}

	th:first-child {
		width: 23px;
	}

	th:last-child, td:last-child {
		width: auto;
		padding: 0 3px 0 2px;
		color: #000;
	}

	svg, input, i {
		margin: 0 auto;
	}
`;

const LayerButtons = styled.div`
	display: flex;
	justify-content: flex-end;
	gap: 5px;
	padding: 4px 1px 0 0;
`;

const WideButton = styled.button`
	display: grid;
	place-items: center;
	width: 46px;
	height: 20px;
	padding: 0;
	border: 1px solid ${({ disabled }) => (disabled ? "#bfbfbf" : "#adadad")};
	background: ${({ disabled }) => (disabled ? "#ccc" : "#e1e1e1")};
	color: ${({ disabled }) => (disabled ? "#808080" : INK)};
`;

const Swatch = styled.i`
	display: block;
	flex: none;
	width: 16px;
	height: 12px;
	background: #000;
`;

const AlignBody = styled.div`
	display: flex;
	flex: 1;
	flex-direction: column;
	padding: 4px 5px 0 3px;
`;

const AlignPane = styled.div`
	flex: 1;
	padding: 7px 1px 0 0;
	border: 1px solid ${LINE};
	border-bottom: 0;
	background: #fff;
`;

const AlignForm = styled.div`
	display: grid;
	grid-template-columns: 103px 147px;
	justify-content: center;
	align-items: center;
	gap: 3px 0;
`;

const GuideInput = styled.input`
	height: 20px;
	min-width: 0;
	padding: 0 2px;
	border: 1px solid #7a7a7a;
	background: #fff;
`;

const AlignGrid = styled.div`
	display: grid;
	grid-template-columns: repeat(5, 22px);
	justify-content: center;
	gap: 5px;
	padding: 4px 0 0 2px;
`;

const AlignButton = styled.button`
	height: 22px;
	padding: 0;
	border: 1px solid #adadad;
	background: #e1e1e1;
`;

/* form controls */

const SelectBox = styled.div`
	position: relative;
	width: 100%;
	color: ${({ $disabled }) => ($disabled ? "#787878" : "#000")};

	svg {
		position: absolute;
		right: 4px;
		top: 7px;
		color: ${({ $disabled }) => ($disabled ? "#a0a0a0" : "#505050")};
		pointer-events: none;
	}
`;

const SelectInput = styled.select`
	display: block;
	width: 100%;
	height: 20px;
	padding: 0 16px 0 2px;
	appearance: none;
	border: 1px solid #adadad;
	background: #e1e1e1;
	font-size: ${({ $small }) => ($small ? "10px" : "11px")};

	&:disabled {
		opacity: 1;
		border-color: #bfbfbf;
		background: #ccc;
	}
`;

const SpinBox = styled.div`
	display: flex;
	width: ${({ $small }) => ($small ? "73px" : "auto")};
	max-width: 108px;
	height: ${({ $small }) => ($small ? "18px" : "20px")};
	padding: 1px;
	border: 1px solid ${({ $disabled }) => ($disabled ? "#ccc" : "#7a7a7a")};
	background: ${({ $disabled }) => ($disabled ? "#f0f0f0" : "#fff")};
	color: ${({ $disabled }) => ($disabled ? "#787878" : "#000")};
	font-size: ${({ $small }) => ($small ? "10px" : "11px")};

	input {
		flex: 1;
		min-width: 0;
		padding: 0 1px;
		border: 0;
		background: none;
	}
`;

const SpinArrows = styled.div`
	display: grid;
	width: 14px;

	button {
		display: grid;
		place-items: center;
		min-height: 0;
		padding: 0;
		border: 1px solid #d0d0d0;
		background: #f0f0f0;
	}

	button + button {
		border-top: 0;
	}
`;

const Checkbox = styled.input`
	position: relative;
	display: block;
	flex: none;
	width: 13px;
	height: 13px;
	appearance: none;
	border: 1px solid ${INK};
	background: #fff;

	&:disabled {
		border-color: #ccc;
	}

	&:checked::after {
		content: "";
		position: absolute;
		left: 4px;
		top: 0;
		width: 4px;
		height: 8px;
		border: solid ${INK};
		border-width: 0 1px 1px 0;
		transform: rotate(42deg);
	}
`;

const CheckLabel = styled.label`
	display: flex;
	align-items: center;
	gap: 4px;
	height: 17px;
	color: ${({ $disabled }) => ($disabled ? "#787878" : "#000")};
`;

const TabList = styled.div`
	display: flex;
	align-items: flex-end;
	height: 20px;
`;

const Tab = styled.button`
	position: relative;
	height: ${({ $on }) => ($on ? "21px" : "18px")};
	margin-bottom: ${({ $on }) => ($on ? "-1px" : "0")};
	padding: ${({ $on }) => ($on ? "0 11px 2px" : "0 11px 0 10px")};
	border: 1px solid ${LINE};
	border-bottom: 0;
	background: ${({ $on }) => ($on ? "#fff" : "#f0f0f0")};
	white-space: nowrap;

	& + & {
		border-left: 0;
	}

	&::after {
		content: "";
		display: ${({ $marked }) => ($marked ? "block" : "none")};
		position: absolute;
		z-index: 1;
		inset: -3px;
		border: 5px solid ${RED};
	}
`;

const PushButton = styled.button`
	width: ${({ $wide }) => ($wide ? "86px" : "73px")};
	height: ${({ $wide }) => ($wide ? "22px" : "21px")};
	padding: 0;
	border: ${({ $primary }) => ($primary ? "2px solid #0078d7" : "1px solid #adadad")};
	background: #e1e1e1;
`;

/* export dialog */

const Dialog = styled.section`
	position: absolute;
	left: 0;
	right: 0;
	top: 239px;
	width: 660px;
	margin: 0 auto;
	border: 1px solid #036870;
	background: #f0f0f0;
	box-shadow: 0 4px 18px rgba(0, 0, 0, 0.4);
`;

const DialogBar = styled.header`
	display: flex;
	align-items: center;
	height: 30px;
	padding-left: 8px;
	background: #036870;
	color: #fff;

	h2 {
		flex: 1;
		padding-left: 6px;
	}
`;

const DialogBarButton = styled.button`
	display: grid;
	place-items: center;
	width: 45px;
	height: 30px;
	padding: 0;
	border: 0;
	background: none;
	font-size: 12px;
`;

const DialogBody = styled.div`
	padding: 9px 9px 10px;
`;

const GroupBody = styled.div`
	display: grid;
	gap: 6px;
	padding: 9px 9px 8px;
`;

const FileRow = styled.div`
	display: flex;
	gap: 7px;
	padding: 1px 1px 1px 0;
`;

const FileField = styled.div`
	position: relative;
	flex: 1;
`;

const FileInput = styled.input`
	width: 100%;
	height: 22px;
	padding: 0 2px;
	border: 1px solid #0078d7;
	background: #fff;
`;

const TextCaret = styled.i`
	position: absolute;
	left: 23px;
	top: 5px;
	width: 1px;
	height: 13px;
	background: #000;
`;

const TabArea = styled.div`
	position: relative;
	margin: 8px 2px 0 0;

	&::after {
		content: "";
		position: absolute;
		inset: -8px -4px 32px -8px;
		border: 5px solid ${RED};
		pointer-events: none;
	}
`;

const Pane = styled.div`
	display: grid;
	gap: 6px;
	padding: 9px 10px 51px;
	border: 1px solid ${LINE};
	background: #fff;
`;

const TwoColumns = styled.div`
	display: grid;
	grid-template-columns: 1fr 1fr;
	align-items: center;
	gap: 6px;
`;

const MarkedField = styled.div`
	position: relative;

	&::after {
		content: "";
		position: absolute;
		inset: -6px -7px;
		border: 5px solid ${RED};
		pointer-events: none;
	}
`;

const MarkedGroups = styled.div`
	position: relative;
	display: grid;
	gap: 7px;

	&::after {
		content: "";
		position: absolute;
		inset: -2px -9px -8px -8px;
		border: 5px solid ${RED};
		pointer-events: none;
	}
`;

const DialogButtons = styled.div`
	display: flex;
	justify-content: flex-end;
	gap: 8px;
	padding: 8px 1px 0 0;
`;

/* status bar */

const Status = styled.footer`
	display: flex;
	height: 27px;
	padding: 3px 2px 2px 0;
`;

const StatusCell = styled.div`
	width: 123px;
	border-right: 1px solid ${LINE};

	&:first-child {
		width: 586px;
	}
`;

const StatusGroup = styled.div`
	display: flex;
	align-items: center;
	padding: 0 1px 0 4px;
	border-right: 1px solid ${LINE};
`;

const ZoomField = styled.div`
	width: 74px;
`;

const NavButton = styled.button`
	display: grid;
	place-items: center;
	width: 21px;
	height: 20px;
	padding: 0;
	border: 0;
	background: none;
	color: #808080;
`;

const StatusCombo = styled.div`
	display: flex;
	align-items: center;
	width: ${({ $width }) => $width}px;
	height: 22px;
	border: 1px solid #7a7a7a;
	background: #fff;
	font-size: 10px;

	${Swatch} {
		margin-left: 4px;
	}

	span {
		padding-left: 3px;
		white-space: nowrap;
	}

	input {
		flex: 1;
		min-width: 0;
		padding: 0;
		border: 0;
		text-align: center;
	}

	button {
		display: grid;
		place-items: center;
		width: 17px;
		height: 20px;
		margin-left: auto;
		padding: 0;
		border: 0;
		border-left: 1px solid #7a7a7a;
		background: #fff;
		color: ${INK};
	}
`;

const PageCount = styled.span`
	padding-left: 4px;
	font-size: 10px;
`;

const Progress = styled.div`
	flex: 1;
	height: 20px;
	margin: 1px 0 0 500px;
	border: 1px solid #bcbcbc;
	background: #e6e6e6;
`;
